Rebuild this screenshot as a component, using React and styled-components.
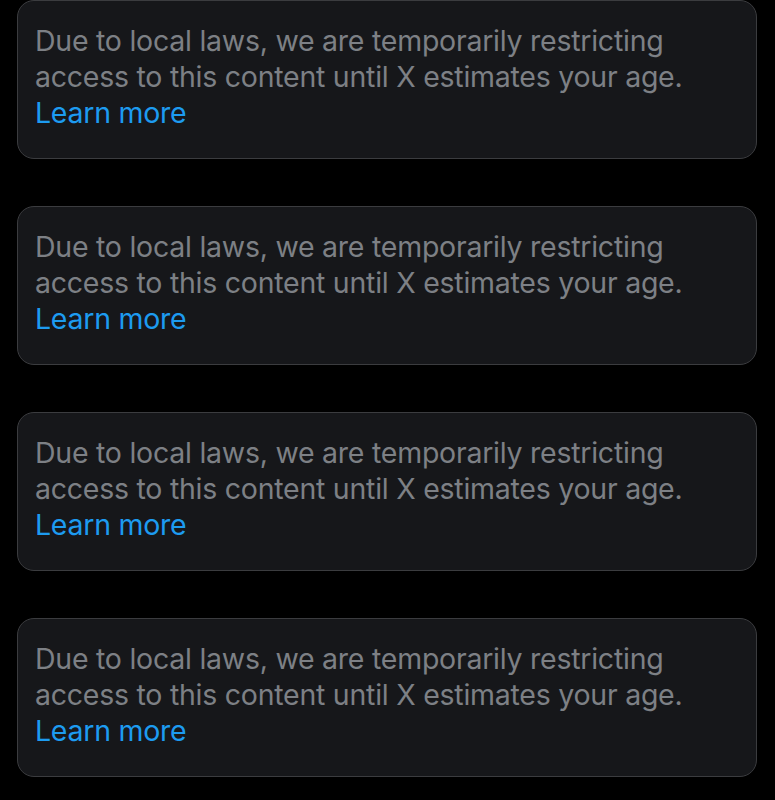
import React from 'react';
import styled, { createGlobalStyle } from 'styled-components';

const GlobalStyle = createGlobalStyle`
    html, body {
        margin: 0;
        padding: 0;
        background: #000;
    }
    body {
        font-family: Inter, "Noto Sans", "Liberation Sans", sans-serif;
    }
`;

const Page = styled.div`
    width: 775px;
    height: 800px;
    overflow: hidden;
    background: #000;
    box-sizing: border-box;
    padding: 0 18px 0 17px;
    display: flex;
    flex-direction: column;
    gap: 47px;
`;

const NoticeCard = styled.div`
    box-sizing: border-box;
    height: 159px;
    flex-shrink: 0;
    background: #16171a;
    border: 1px solid #3b3c3f;
    border-radius: 17px;
    padding: 22px 10px 0 17px;
`;

const NoticeText = styled.p`
    margin: 0;
    color: #7d8085;
    font-size: 28.5px;
    line-height: 36px;
    letter-spacing: -0.25px;
    white-space: nowrap;
`;

const LearnMore = styled.a`
    display: block;
    color: #1d9bf0;
    text-decoration: none;
`;

const App = () => {
    const notices = [1, 2, 3, 4];

    return (
        <>
            <GlobalStyle />
            <Page>
                {notices.map(n => (
                    <NoticeCard key={n}>
                        <NoticeText>
                            Due to local laws, we are temporarily restricting<br />
                            access to this content until X estimates your age.
                            <LearnMore href="#">Learn more</LearnMore>
                        </NoticeText>
                    </NoticeCard>
                ))}
            </Page>
        </>
    );
};

export default App;
